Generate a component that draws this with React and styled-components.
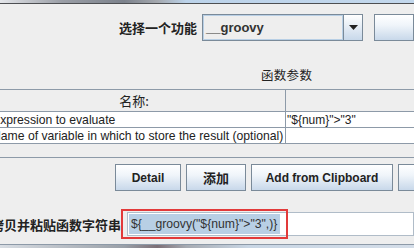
import React from 'react';
import styled, { createGlobalStyle } from 'styled-components';

const GlobalStyle = createGlobalStyle`
	html, body {
		margin: 0;
		padding: 0;
		background: #eeeeee;
		overflow: hidden;
	}
	body {
		width: 414px;
		height: 248px;
		font-family: 'Liberation Sans', Arial, sans-serif;
	}
`;

const CJK = `'Noto Sans CJK SC', 'Liberation Sans', sans-serif`;

const params = [
	{ name: 'Expression to evaluate', value: '"${num}">"3"' },
	{ name: 'Name of variable in which to store the result (optional)', value: '' },
];

export default function App() {
	return (
		<Page>
			<GlobalStyle />
			<TopStrip />
			<SelectorRow>
				<BoldLabel>选择一个功能</BoldLabel>
				<Combo>
					<ComboText>__groovy</ComboText>
					<ComboArrow>
						<svg width='9' height='5' viewBox='0 0 9 5'>
							<path d='M0 0 H9 L4.5 5 Z' fill='#222' />
						</svg>
					</ComboArrow>
				</Combo>
				<Button $width={40} />
			</SelectorRow>
			<Title>函数参数</Title>
			<Table>
				<HeaderRow>
					<NameCell $header>名称:</NameCell>
					<ValueCell />
				</HeaderRow>
				{params.map((p) => (
					<Row key={p.name}>
						<NameCell>{p.name}</NameCell>
						<ValueCell>{p.value}</ValueCell>
					</Row>
				))}
			</Table>
			<Separator />
			<ButtonRow>
				<Button $width={66}>Detail</Button>
				<Button $width={60} $cjk>添加</Button>
				<Button $width={142}>Add from Clipboard</Button>
				<Button $width={40} />
			</ButtonRow>
			<FieldRow>
				<FieldLabel>
					<BoldLabel>拷贝并粘贴函数字符串</BoldLabel>
				</FieldLabel>
				<Field>
					<Selected>{'${__groovy("${num}">"3",)}'}</Selected>
				</Field>
				<Highlight />
			</FieldRow>
			<BottomStrip />
		</Page>
	);
}

const Page = styled.div`
	width: 414px;
	height: 248px;
	overflow: hidden;
	display: flex;
	flex-direction: column;
`;

const TopStrip = styled.div`
	height: 3px;
	flex-shrink: 0;
	background: linear-gradient(90deg, #e4e6ea 0%, #9a9ea6 15%, #7c828c 30%, #a4a8ae 38%, #bcd3ea 45%, #c3d8ed 100%);
	border-bottom: 1px solid #4d4f52;
`;

const SelectorRow = styled.div`
	display: flex;
	align-items: center;
	margin-top: 10px;
	padding-left: 119px;
	height: 27px;
	flex-shrink: 0;
`;

const BoldLabel = styled.span`
	font-family: ${CJK};
	font-weight: 700;
	font-size: 13px;
	color: #222;
	white-space: nowrap;
`;

const Combo = styled.div`
	display: flex;
	margin-left: 5px;
	width: 188px;
	height: 27px;
	box-sizing: border-box;
	border: 1px solid #7a8a99;
	background: #eeeeee;
`;

const ComboText = styled.div`
	flex: 1;
	display: flex;
	align-items: center;
	padding-left: 2px;
	border: 1px solid #b8cfe5;
	font-weight: 700;
	font-size: 13px;
	color: #333;
`;

const ComboArrow = styled.div`
	width: 18px;
	display: flex;
	align-items: center;
	justify-content: center;
	border-left: 1px solid #7a8a99;
	background: linear-gradient(#ffffff, #c8d8ea);
`;

const Title = styled.div`
	margin-top: 26px;
	padding-left: 261px;
	height: 16px;
	line-height: 16px;
	font-family: ${CJK};
	font-size: 12.5px;
	color: #222;
	letter-spacing: 0.3px;
	flex-shrink: 0;
`;

const Table = styled.div`
	margin-top: 6px;
	margin-left: -9px;
	width: 440px;
	flex-shrink: 0;
	border-top: 1px solid #8d9aa8;
`;

const HeaderRow = styled.div`
	display: flex;
	height: 21px;
	background: #eeeeee;
	border-bottom: 1px solid #8d9aa8;
`;

const Row = styled.div`
	display: flex;
	height: 15px;
	background: #ffffff;
	border-bottom: 1px solid #8d9aa8;
`;

const NameCell = styled.div`
	width: 295px;
	flex-shrink: 0;
	box-sizing: border-box;
	border-right: 1px solid #8d9aa8;
	white-space: nowrap;
	overflow: hidden;
	display: flex;
	align-items: center;
	justify-content: ${(p) => (p.$header ? 'center' : 'flex-start')};
	padding-left: ${(p) => (p.$header ? '0' : '1px')};
	padding-right: ${(p) => (p.$header ? '8px' : '0')};
	font-family: ${(p) => (p.$header ? CJK : `'Liberation Sans', Arial, sans-serif`)};
	font-size: ${(p) => (p.$header ? '13px' : '12.2px')};
	color: #222;
`;

const ValueCell = styled.div`
	flex: 1;
	display: flex;
	align-items: center;
	padding-left: 1px;
	font-size: 12px;
	color: #222;
	white-space: nowrap;
`;

const Separator = styled.div`
	margin-top: 13px;
	height: 1px;
	flex-shrink: 0;
	background: #8d9aa8;
`;

const ButtonRow = styled.div`
	display: flex;
	gap: 5px;
	margin-top: 6px;
	padding-left: 115px;
	height: 27px;
	flex-shrink: 0;
`;

const Button = styled.button`
	width: ${(p) => p.$width}px;
	height: 27px;
	flex-shrink: 0;
	margin: 0;
	padding: 0;
	box-sizing: border-box;
	border: 1px solid #7a8a99;
	border-radius: 0;
	background: linear-gradient(#ffffff 0%, #f0f5fa 40%, #c8d8ea 100%);
	font-family: ${(p) => (p.$cjk ? CJK : `'Liberation Sans', Arial, sans-serif`)};
	font-weight: 700;
	font-size: ${(p) => (p.$cjk ? '13px' : '12px')};
	color: #222;
	${SelectorRow} & {
		margin-left: 11px;
	}
`;

const FieldRow = styled.div`
	position: relative;
	display: flex;
	align-items: center;
	margin-top: 18px;
	height: 30px;
	flex-shrink: 0;
`;

const FieldLabel = styled.div`
	width: 121px;
	flex-shrink: 0;
	display: flex;
	justify-content: flex-end;
	overflow: hidden;
`;

const Field = styled.div`
	margin-left: 6px;
	flex: 1;
	height: 24px;
	box-sizing: border-box;
	border: 1px solid #b0bcc8;
	background: #ffffff;
	display: flex;
	align-items: stretch;
	padding: 1px 0 1px 1px;
`;

const Selected = styled.span`
	display: flex;
	align-items: center;
	padding: 0 3px 0 2px;
	background: #b8cfe5;
	font-size: 12.2px;
	color: #333;
	white-space: nowrap;
`;

const Highlight = styled.div`
	position: absolute;
	left: 121px;
	top: 0;
	width: 167px;
	height: 30px;
	box-sizing: border-box;
	border: 2px solid #e23a3a;
	pointer-events: none;
`;

const BottomStrip = styled.div`
	margin-top: 5px;
	flex: 1;
	border-top: 1px solid #8d9aa8;
	background: linear-gradient(90deg, #d8dde3 0%, #9aa0a8 30%, #7d6f76 38%, #a7abb2 45%, #c9d6e4 60%, #d4dde8 100%);
`;
